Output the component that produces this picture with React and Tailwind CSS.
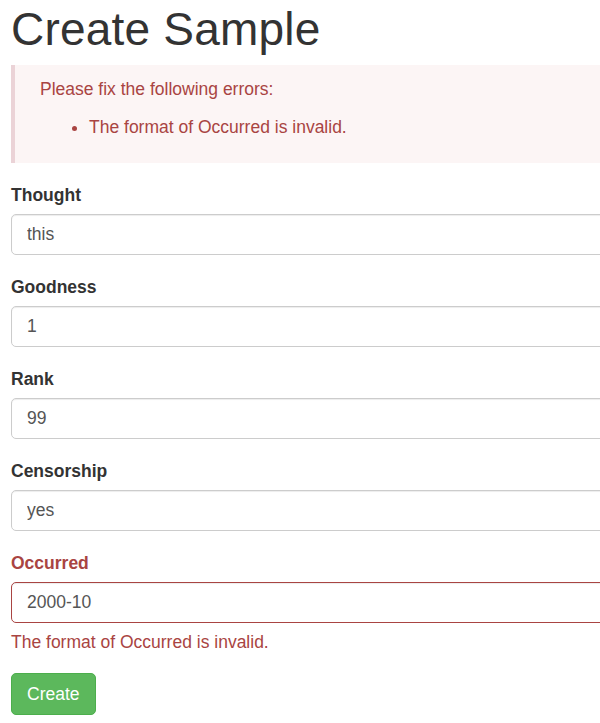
const fields = [
  { label: 'Thought', value: 'this' },
  { label: 'Goodness', value: '1' },
  { label: 'Rank', value: '99' },
  { label: 'Censorship', value: 'yes' },
];

export default function App() {
  return (
    <div className="w-[600px] h-[723px] overflow-hidden bg-white font-['Liberation_Sans',Arial,sans-serif] text-[#333]">
      <div className="w-[680px] pl-[11px]">
        <h1 className="mt-[5px] text-[46px] leading-[48px] font-normal tracking-[0.2px] text-[#333]">Create Sample</h1>

        {/* Error summary */}
        <div className="mt-[12px] border-l-[4px] border-[#ebd3d7] bg-[#fcf5f5] pl-[25px] pt-[12px] pb-[24px] text-[17.5px] leading-[24px] text-[#a94442]">
          <p>Please fix the following errors:</p>
          <ul className="mt-[14px] list-disc pl-[49px]">
            <li>The format of Occurred is invalid.</li>
          </ul>
        </div>

        <form className="mt-[20px]">
          {fields.map((f) => (
            <div key={f.label} className="mb-[20px]">
              <label className="block text-[17.5px] leading-[24px] font-bold text-[#333]">{f.label}</label>
              <input
                readOnly
                value={f.value}
                className="mt-[7px] block w-full h-[41px] rounded-[5px] border border-[#ccc] px-[15px] text-[17.5px] text-[#555] shadow-[inset_0_1px_1px_rgba(0,0,0,0.075)] outline-none"
              />
            </div>
          ))}

          <div>
            <label className="block text-[17.5px] leading-[24px] font-bold text-[#a94442]">Occurred</label>
            <input
              readOnly
              value="2000-10"
              className="mt-[7px] block w-full h-[41px] rounded-[5px] border border-[#a94442] px-[15px] text-[17.5px] text-[#555] shadow-[inset_0_1px_1px_rgba(0,0,0,0.075)] outline-none"
            />
            <p className="mt-[7px] text-[17.5px] leading-[24px] text-[#a94442]">The format of Occurred is invalid.</p>
          </div>

          <button
            type="button"
            className="mt-[19px] h-[42px] rounded-[5px] border border-[#4cae4c] bg-[#5cb85c] px-[15px] text-[17.5px] text-white"
          >
            Create
          </button>
        </form>
      </div>
    </div>
  );
}
